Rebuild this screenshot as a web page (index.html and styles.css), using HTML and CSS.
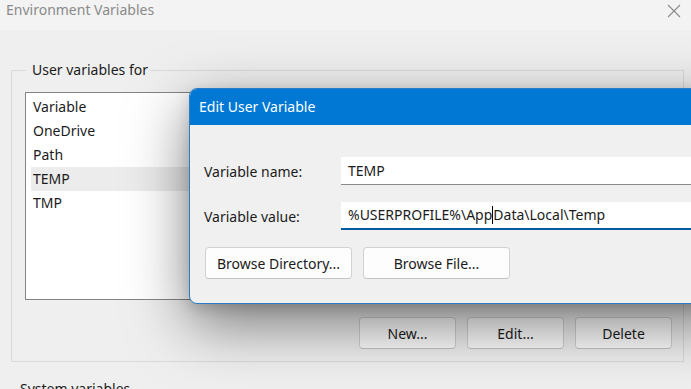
FILE: index.html
```html
<!DOCTYPE html>
<html lang="en">
<head>
<meta charset="utf-8">
<title>Environment Variables</title>
<link rel="stylesheet" href="styles.css">
</head>
<body>
<div class="window">
  <div class="titlebar">
    <span class="title">Environment Variables</span>
    <svg class="close" width="14" height="14" viewBox="0 0 14 14"><path d="M1 1 L13 13 M13 1 L1 13" stroke="#8a8a8a" stroke-width="1.1" fill="none"/></svg>
  </div>
  <div class="body">
    <fieldset class="group">
      <legend>User variables for</legend>
      <div class="listbox">
        <div class="row">Variable</div>
        <div class="row">OneDrive</div>
        <div class="row">Path</div>
        <div class="row sel">TEMP</div>
        <div class="row">TMP</div>
      </div>
      <div class="actions">
        <button class="btn">New...</button>
        <button class="btn">Edit...</button>
        <button class="btn">Delete</button>
      </div>
    </fieldset>
    <div class="sys">System variables</div>
  </div>

  <div class="dialog">
    <div class="dlg-title">Edit User Variable</div>
    <div class="dlg-body">
      <div class="field">
        <span class="lbl">Variable name:</span>
        <div class="input">TEMP</div>
      </div>
      <div class="field">
        <span class="lbl">Variable value:</span>
        <div class="input focus">%USERPROFILE%\App<span class="caret"></span>Data\Local\Temp</div>
      </div>
      <div class="dlg-buttons">
        <button class="btn">Browse Directory...</button>
        <button class="btn">Browse File...</button>
      </div>
    </div>
  </div>
</div>
</body>
</html>
```

FILE: styles.css
```css
* { box-sizing: border-box; }
html, body { margin: 0; padding: 0; }
body {
  width: 691px;
  height: 389px;
  overflow: hidden;
  background: #efefef;
  font-family: "Noto Sans", "Open Sans", sans-serif;
  font-size: 14px;
  color: #1b1b1b;
}
.window { position: relative; width: 691px; height: 389px; overflow: hidden; }
.titlebar {
  height: 30px;
  background: #f3f3f3;
  display: flex;
  align-items: flex-start;
  justify-content: space-between;
  padding: 0 10px 0 6px;
}
.title { color: #8a8a8a; font-size: 14px; line-height: 20px; }
.close { margin-top: 4px; }
.body { padding: 31px 7px 0 11px; }
.group {
  margin: 0;
  border: 1px solid #dadada;
  padding: 0 11px 19px 13px;
  height: 301px;
}
.group legend {
  padding: 0 2px 0 6px;
  margin-left: 1px;
  line-height: 18px;
  font-size: 14px;
}
.listbox {
  margin-top: 13px;
  width: 420px;
  height: 208px;
  background: #fff;
  border: 1px solid #848484;
  padding: 2px 0 0 5px;
}
.row { height: 24px; line-height: 24px; padding-left: 2px; }
.row.sel { background: #ececec; }
.actions {
  display: flex;
  justify-content: flex-end;
  gap: 11px;
  margin-top: 17px;
}
.btn {
  font-family: inherit;
  font-size: 14px;
  color: #1b1b1b;
  background: #fdfdfd;
  border: 1px solid #d2d2d2;
  border-bottom-color: #c4c4c4;
  border-radius: 4px;
  height: 32px;
  width: 97px;
  padding: 0;
}
.sys { margin: 17px 0 0 9px; line-height: 20px; }

.dialog {
  position: absolute;
  left: 189px;
  top: 88px;
  width: 560px;
  height: 216px;
  border: 1px solid #2b7bc6;
  border-radius: 8px 0 0 8px;
  background: #f0f0f0;
  box-shadow: 0 20px 60px rgba(0,0,0,0.5), 0 4px 14px rgba(0,0,0,0.15);
  overflow: hidden;
}
.dlg-title {
  background: #0078d4;
  color: #fff;
  height: 37px;
  line-height: 37px;
  padding-left: 10px;
  font-size: 14px;
  margin: -1px -1px 0 -1px;
}
.dlg-body { padding: 32px 0 0 14px; }
.field {
  display: flex;
  align-items: center;
  height: 28px;
  margin-bottom: 17px;
}
.lbl { width: 137px; }
.input {
  flex: 1;
  height: 28px;
  background: #fff;
  border-bottom: 1px solid #8a8a8a;
  line-height: 27px;
  padding-left: 7px;
  white-space: nowrap;
}
.input.focus { border-bottom: 2px solid #005a9e; line-height: 26px; }
.caret {
  display: inline-block;
  width: 1px;
  height: 18px;
  background: #000;
  vertical-align: -4px;
}
.dlg-buttons { display: flex; gap: 11px; margin-top: 5px; padding-left: 1px; }
.dlg-buttons .btn { width: 147px; }
```
